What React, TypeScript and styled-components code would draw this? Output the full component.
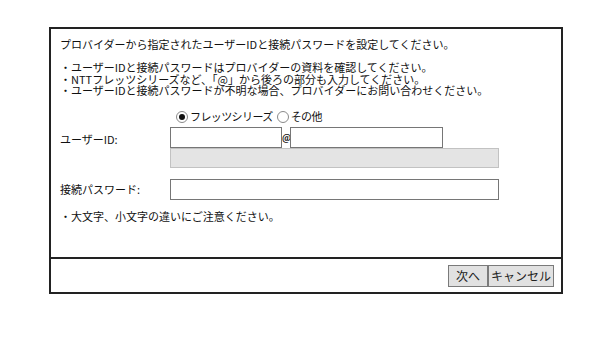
import React, { useState } from "react";
import styled, { createGlobalStyle } from "styled-components";

const GlobalStyle = createGlobalStyle`
  html, body {
    margin: 0;
    padding: 0;
    background: #ffffff;
  }
  body {
    font-family: "Noto Sans CJK JP", "Noto Sans", sans-serif;
    color: #111;
  }
`;

const Page = styled.div`
  padding: 27px 0 0 49px;
`;

const Dialog = styled.div`
  width: 514px;
  box-sizing: border-box;
  border: 2px solid #222;
`;

const Body = styled.div`
  height: 228px;
  box-sizing: border-box;
  padding: 10px 9px 0;
  font-size: 11px;
  line-height: 11px;
`;

const Intro = styled.p`
  margin: 0 0 12px;
`;

const Notes = styled.div`
  display: flex;
  flex-direction: column;
  line-height: 11.5px;
`;

const Form = styled.div`
  display: grid;
  grid-template-columns: 110px 1fr;
  margin-top: 13px;
`;

const Label = styled.div<{ $top?: number }>`
  grid-column: 1;
  padding-top: ${(p) => p.$top ?? 0}px;
  line-height: 21px;
  white-space: nowrap;
`;

const Fields = styled.div<{ $top?: number }>`
  grid-column: 2;
  margin-top: ${(p) => p.$top ?? 0}px;
  display: flex;
  flex-direction: column;
`;

const RadioRow = styled.div`
  grid-column: 2;
  display: flex;
  align-items: center;
  height: 14px;
  padding-left: 6px;
  margin-bottom: 3px;
  letter-spacing: -0.6px;
`;

const RadioOption = styled.label`
  display: flex;
  align-items: center;
  cursor: pointer;
  margin-right: 4px;
`;

const RadioDot = styled.span<{ $checked: boolean }>`
  width: 10px;
  height: 10px;
  border-radius: 50%;
  border: 1px solid #8a8a8a;
  background: #fff;
  margin-right: 2px;
  display: flex;
  align-items: center;
  justify-content: center;
  &::after {
    content: "";
    width: 6px;
    height: 6px;
    border-radius: 50%;
    background: ${(p) => (p.$checked ? "#111" : "transparent")};
  }
`;

const InputLine = styled.div`
  display: flex;
  align-items: center;
`;

const TextBox = styled.input<{ $w: number }>`
  width: ${(p) => p.$w}px;
  height: 21px;
  box-sizing: border-box;
  border: 1px solid #767676;
  background: #fff;
  padding: 0 3px;
  margin: 0;
  font: inherit;
  outline: none;
`;

const At = styled.span`
  width: 8px;
  font-size: 9px;
  font-weight: bold;
  text-align: center;
`;

const DisabledBox = styled.div`
  width: 329px;
  height: 20px;
  box-sizing: border-box;
  border: 1px solid #c2c2c2;
  background: #e4e4e4;
`;

const Caution = styled.p`
  margin: 11px 0 0;
`;

const Footer = styled.div`
  height: 33px;
  border-top: 2px solid #222;
  display: flex;
  justify-content: flex-end;
  align-items: center;
  padding-right: 7px;
`;

const Button = styled.button<{ $w: number }>`
  width: ${(p) => p.$w}px;
  height: 22px;
  box-sizing: border-box;
  border: 1px solid #7a7a7a;
  background: #e1e1e1;
  color: #222;
  font-family: "Noto Sans CJK JP", sans-serif;
  font-size: 12px;
  line-height: 1;
  padding: 0;
  margin: 0;
  cursor: pointer;
`;

export default function App() {
  const [kind, setKind] = useState<"flets" | "other">("flets");

  return (
    <Page>
      <GlobalStyle />
      <Dialog>
        <Body>
          <Intro>プロバイダーから指定されたユーザーIDと接続パスワードを設定してください。</Intro>
          <Notes>
            <span>・ユーザーIDと接続パスワードはプロバイダーの資料を確認してください。</span>
            <span>・NTTフレッツシリーズなど、「@」から後ろの部分も入力してください。</span>
            <span>・ユーザーIDと接続パスワードが不明な場合、プロバイダーにお問い合わせください。</span>
          </Notes>
          <Form>
            <RadioRow>
              <RadioOption onClick={() => setKind("flets")}>
                <RadioDot $checked={kind === "flets"} />
                フレッツシリーズ
              </RadioOption>
              <RadioOption onClick={() => setKind("other")}>
                <RadioDot $checked={kind === "other"} />
                その他
              </RadioOption>
            </RadioRow>
            <Label $top={2}>ユーザーID:</Label>
            <Fields>
              <InputLine>
                <TextBox $w={112} />
                <At>@</At>
                <TextBox $w={153} />
              </InputLine>
              <DisabledBox />
            </Fields>
            <Label $top={11}>接続パスワード:</Label>
            <Fields $top={11}>
              <TextBox $w={329} type="password" />
            </Fields>
          </Form>
          <Caution>・大文字、小文字の違いにご注意ください。</Caution>
        </Body>
        <Footer>
          <Button $w={40}>次へ</Button>
          <Button $w={66}>キャンセル</Button>
        </Footer>
      </Dialog>
    </Page>
  );
}
